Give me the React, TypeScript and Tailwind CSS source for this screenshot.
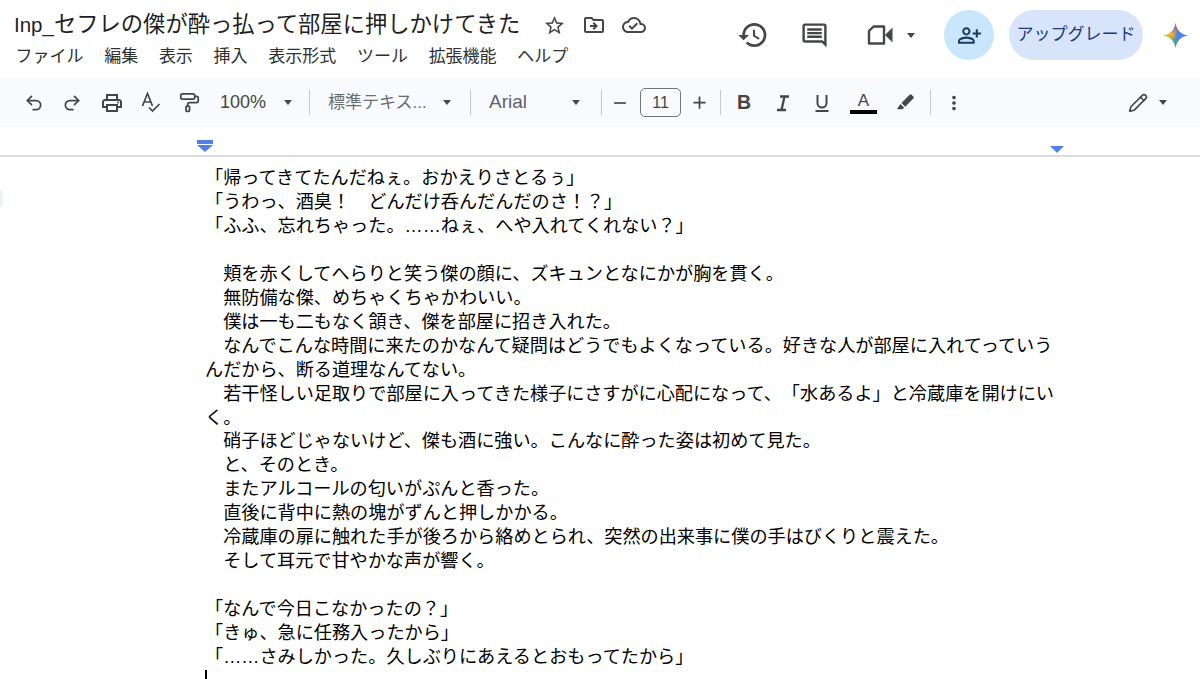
import { Pencil, PaintRoller, Redo2, Undo2 } from 'lucide-react';
import {
  MdHistory,
  MdMoreVert,
  MdOutlineCloudDone,
  MdOutlineDriveFileMove,
  MdOutlinePersonAddAlt,
  MdOutlinePrint,
  MdStarBorder,
  MdAdd,
  MdRemove,
  MdOutlineInsertComment,
} from 'react-icons/md';

const FONT = '[font-family:"Liberation_Sans","Noto_Sans_CJK_JP",sans-serif]';

const MENUS = ['ファイル', '編集', '表示', '挿入', '表示形式', 'ツール', '拡張機能', 'ヘルプ'];

const LINES = [
  '「帰ってきてたんだねぇ。おかえりさとるぅ」',
  '「うわっ、酒臭！　どんだけ呑んだんだのさ！？」',
  '「ふふ、忘れちゃった。……ねぇ、へや入れてくれない？」',
  '',
  '　頬を赤くしてへらりと笑う傑の顔に、ズキュンとなにかが胸を貫く。',
  '　無防備な傑、めちゃくちゃかわいい。',
  '　僕は一も二もなく頷き、傑を部屋に招き入れた。',
  '　なんでこんな時間に来たのかなんて疑問はどうでもよくなっている。好きな人が部屋に入れてっていうんだから、断る道理なんてない。',
  '　若干怪しい足取りで部屋に入ってきた様子にさすがに心配になって、「水あるよ」と冷蔵庫を開けにいく。',
  '　硝子ほどじゃないけど、傑も酒に強い。こんなに酔った姿は初めて見た。',
  '　と、そのとき。',
  '　またアルコールの匂いがぷんと香った。',
  '　直後に背中に熱の塊がずんと押しかかる。',
  '　冷蔵庫の扉に触れた手が後ろから絡めとられ、突然の出来事に僕の手はびくりと震えた。',
  '　そして耳元で甘やかな声が響く。',
  '',
  '「なんで今日こなかったの？」',
  '「きゅ、急に任務入ったから」',
  '「……さみしかった。久しぶりにあえるとおもってたから」',
];

function Caret({ className = '' }: { className?: string }) {
  return (
    <span
      className={`h-0 w-0 shrink-0 border-x-[4px] border-t-[5px] border-x-transparent border-t-[#444746] ${className}`}
    />
  );
}

function Divider({ className = '' }: { className?: string }) {
  return <span className={`h-[25px] w-px shrink-0 bg-[#c7c7c7] ${className}`} />;
}

const STAR = 'M12 0C12.8 6.8 17.2 11.2 24 12 17.2 12.8 12.8 17.2 12 24 11.2 17.2 6.8 12.8 0 12 6.8 11.2 11.2 6.8 12 0Z';

function Gemini() {
  return (
    <svg width="25" height="25" viewBox="0 0 24 24">
      <defs>
        <linearGradient id="gem" x1="0" y1="0" x2="0" y2="1">
          <stop offset="0.1" stopColor="#e8453c" />
          <stop offset="0.45" stopColor="#f5b52e" />
          <stop offset="0.8" stopColor="#38a85a" />
        </linearGradient>
        <linearGradient id="gem2" x1="0" y1="0" x2="1" y2="0">
          <stop offset="0.38" stopColor="#4a86f0" stopOpacity="0" />
          <stop offset="0.58" stopColor="#4a86f0" />
        </linearGradient>
      </defs>
      <path d={STAR} fill="url(#gem)" />
      <path d={STAR} fill="url(#gem2)" />
    </svg>
  );
}

function VideoIcon() {
  return (
    <svg className="ml-[38px]" width="26" height="20" viewBox="0 0 26 20" fill="none">
      <path d="M6.5 1.5H17V18.5H2V6Z" stroke="#444746" strokeWidth="2.4" strokeLinejoin="round" />
      <path d="M18 10 25.5 2.5V17.5Z" fill="#444746" />
    </svg>
  );
}

function SpellIcon() {
  return (
    <svg className="ml-[17px]" width="20" height="21" viewBox="0 0 20 21" fill="none" stroke="#444746" strokeWidth="1.7">
      <path d="M1.5 14 6.5 1.5 11.5 14M3.2 10H9.8" />
      <path d="M8 15.5 11.5 19 18.5 12" />
    </svg>
  );
}

function ItalicIcon() {
  return (
    <svg className="ml-[19px]" width="20" height="20" viewBox="0 0 20 20" fill="none" stroke="#444746" strokeWidth="2.3">
      <path d="M7 3.5H16M4 17H13M11.5 3.5 8.5 17" />
    </svg>
  );
}

function UnderlineIcon() {
  return (
    <svg className="ml-[19px]" width="20" height="20" viewBox="0 0 20 20" fill="none" stroke="#444746" strokeWidth="2">
      <path d="M5.5 2V10A4.5 4.5 0 0 0 14.5 10V2" />
      <path d="M3.5 18H16.5" />
    </svg>
  );
}

function HighlightIcon() {
  return (
    <svg className="ml-[18px]" width="20" height="20" viewBox="0 0 24 24" fill="#444746">
      <path d="M17.5 2.2C18.2 1.6 19.2 1.6 19.9 2.2L22 4.3C22.6 5 22.6 6 22 6.7L12.3 16.4 7.8 11.9Z" />
      <path d="M6.6 13.2 11 17.6 9 19.6H3.4L2.6 18.8 6.6 13.2Z" />
    </svg>
  );
}

export default function App() {
  return (
    <div className={`flex h-[679px] w-[1200px] flex-col overflow-hidden bg-white text-[#1f1f1f] [text-spacing-trim:space-all] ${FONT}`}>
      {/* Title + menu */}
      <div className="flex h-[78px] shrink-0">
        <div className="pl-[14px]">
          <div className="flex h-[30px] items-center pt-[20px]">
            <span className="leading-none whitespace-nowrap">
              <span className="text-[20.5px]">Inp_</span>
              <span className="text-[22.3px]">セフレの傑が酔っ払って部屋に押しかけてきた</span>
            </span>
            <MdStarBorder className="ml-[23px] text-[#444746]" size={23} />
            <MdOutlineDriveFileMove className="ml-[16px] text-[#444746]" size={24} />
            <MdOutlineCloudDone className="ml-[16px] text-[#444746]" size={24} />
          </div>
          <div className="mt-[17px] flex gap-[20.7px] pl-[1.5px] text-[17px] leading-[20px] text-[#303030]">
            {MENUS.map((m) => (
              <span key={m}>{m}</span>
            ))}
          </div>
        </div>
        <div className="mt-[10px] ml-auto flex h-[50px] items-center pr-[12px]">
          <MdHistory className="text-[#444746]" size={32} />
          <MdOutlineInsertComment className="ml-[31px] text-[#444746]" size={29} />
          <VideoIcon />
          <Caret className="ml-[14px]" />
          <div className="ml-[29px] flex h-[50px] w-[50px] items-center justify-center rounded-full bg-[#c9e6fd]">
            <MdOutlinePersonAddAlt className="text-[#1f3a5f]" size={25} />
          </div>
          <div className="ml-[15px] flex h-[50px] w-[134px] items-center justify-center rounded-full bg-[#d8e4f9] text-[17px] text-[#1d3a7a]">
            アップグレード
          </div>
          <div className="ml-[20px]">
            <Gemini />
          </div>
        </div>
      </div>

      {/* Toolbar */}
      <div className="flex h-[49px] shrink-0 items-center bg-[#f8fafd] text-[#444746]">
        <Undo2 className="ml-[24px]" size={20} strokeWidth={2.1} />
        <Redo2 className="ml-[18px]" size={20} strokeWidth={2.1} />
        <MdOutlinePrint className="ml-[18px]" size={24} />
        <SpellIcon />
        <PaintRoller className="ml-[18px]" size={21} strokeWidth={2} />
        <span className="ml-[20px] w-[48px] text-[18px]">100%</span>
        <Caret className="ml-[16px]" />
        <Divider className="ml-[17px]" />
        <span className="ml-[18px] w-[100px] text-[17px] whitespace-nowrap text-[#6b6e70]">標準テキス...</span>
        <Caret className="ml-[15px]" />
        <Divider className="ml-[19px]" />
        <span className="ml-[18px] w-[38px] text-[19px] text-[#5f6368]">Arial</span>
        <Caret className="ml-[45px]" />
        <Divider className="ml-[21px]" />
        <MdRemove className="ml-[8px]" size={20} />
        <span className="ml-[10px] flex h-[29px] w-[41px] shrink-0 items-center justify-center rounded-[5px] border border-[#747775] text-[16px]">11</span>
        <MdAdd className="ml-[8px]" size={21} />
        <Divider className="ml-[10px]" />
        <span className="ml-[13px] w-[20px] text-center text-[19.5px] font-bold">B</span>
        <ItalicIcon />
        <UnderlineIcon />
        <span className="ml-[18px] flex w-[27px] shrink-0 flex-col items-center text-[17px] leading-[19px]">
          A
          <span className="h-[4px] w-[27px] bg-black" />
        </span>
        <HighlightIcon />
        <Divider className="ml-[15px]" />
        <MdMoreVert className="ml-[12px]" size={22} />
        <Pencil className="ml-[163px]" size={20} strokeWidth={2} />
        <Caret className="ml-[11px]" />
      </div>

      {/* Ruler */}
      <div className="relative h-[30px] shrink-0 border-b-2 border-[#dcdcdc]">
        <span className="absolute top-[13px] left-[197px] h-[4px] w-[16px] bg-[#4f81ea]" />
        <span className="absolute top-[18px] left-[197px] h-0 w-0 border-x-[8px] border-t-[7px] border-x-transparent border-t-[#4f81ea]" />
        <span className="absolute top-[19px] left-[1050px] h-0 w-0 border-x-[7px] border-t-[7px] border-x-transparent border-t-[#4f81ea]" />
      </div>

      {/* Document */}
      <div className="relative pt-[10px] pl-[205px]">
        <span className="absolute top-[33px] left-0 h-[18px] w-[3px] rounded-r-full bg-[#eef1f8]" />
        <div className="w-[860px] text-[18.15px] leading-[23.95px] text-black">
          {LINES.map((l, i) => (
            <p key={i} className="min-h-[23.95px]">
              {l}
            </p>
          ))}
          <span className="block h-[14px] w-[2px] bg-black" />
        </div>
      </div>
    </div>
  );
}
